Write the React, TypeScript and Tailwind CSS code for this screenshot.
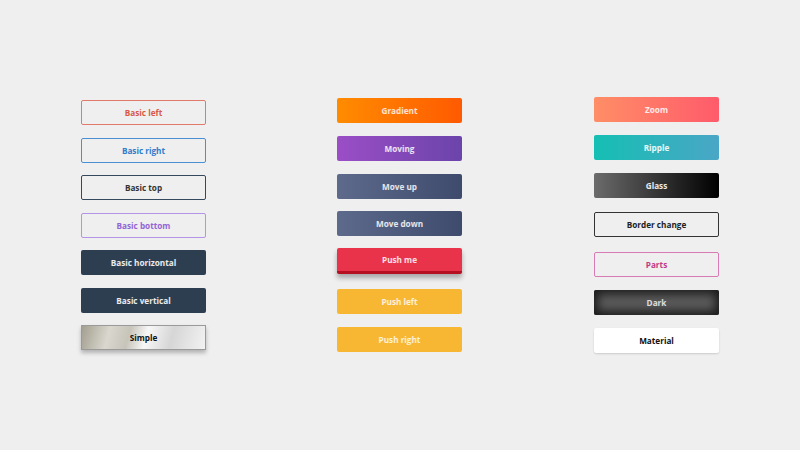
import React from 'react'

const base =
  "flex h-[25px] w-[125px] items-center justify-center rounded-[2px] pt-[2px] text-[8.2px] font-bold leading-none [font-family:'Open_Sans',sans-serif]"

export default function App() {
  return (
    <div className="flex h-[450px] w-full gap-[131px] bg-[#efefef] pl-[81px]">
      {/* Outline and flat buttons */}
      <div className="flex flex-col gap-[12.5px] pt-[100px]">
        <button className={`${base} border border-[#e07a6a] text-[#d95a45]`}>Basic left</button>
        <button className={`${base} border border-[#4a8fd0] text-[#2f7ccb]`}>Basic right</button>
        <button className={`${base} border border-[#34495e] text-[#333]`}>Basic top</button>
        <button className={`${base} border border-[#b394e6] text-[#9264d6]`}>Basic bottom</button>
        <button className={`${base} bg-[#2c3e50] text-white/90`}>Basic horizontal</button>
        <button className={`${base} bg-[#2c3e50] text-white/90`}>Basic vertical</button>
        <button
          className={`${base} rounded-none border border-[#9a9a9a] bg-[linear-gradient(105deg,#a39f90_0%,#d9d7ce_22%,#c7c4ba_38%,#f7f7f7_52%,#d6d6d6_72%,#f2f2f2_100%)] text-[#111] shadow-[0_3px_4px_rgba(0,0,0,0.25)]`}
        >
          Simple
        </button>
      </div>

      {/* Solid and gradient buttons */}
      <div className="flex flex-col pt-[98px]">
        <button className={`${base} bg-[linear-gradient(90deg,#ff8c00,#ff5a00)] text-white/80`}>Gradient</button>
        <button className={`${base} mt-[13px] bg-[linear-gradient(90deg,#9b4ec6,#6b44aa)] text-white/85`}>Moving</button>
        <button className={`${base} mt-[13px] bg-[linear-gradient(90deg,#5e6a8c,#3f4b6c)] text-white/85`}>Move up</button>
        <button className={`${base} mt-[12px] bg-[linear-gradient(90deg,#5e6a8c,#3f4b6c)] text-white/85`}>Move down</button>
        <button
          className={`${base} mt-[12px] h-[26px] border-b-[3px] border-[#b5101f] bg-[#e9334a] text-white/85 shadow-[0_4px_5px_rgba(0,0,0,0.3)]`}
        >
          Push me
        </button>
        <button className={`${base} mt-[15px] bg-[#f7b733] text-white/80`}>Push left</button>
        <button className={`${base} mt-[13px] bg-[#f7b733] text-white/80`}>Push right</button>
      </div>

      {/* Effect buttons */}
      <div className="ml-px flex w-[124px] flex-col pt-[97px]">
        <button className={`${base} w-[124px] bg-[linear-gradient(90deg,#ff8e66,#ff5b6b)] text-white/85`}>Zoom</button>
        <button className={`${base} mt-[13px] w-[124px] bg-[linear-gradient(90deg,#15bfb3,#4aa6c6)] text-white/90`}>Ripple</button>
        <button className={`${base} mt-[13px] w-[124px] bg-[linear-gradient(90deg,#6b6b6b,#000)] text-white/90`}>Glass</button>
        <button className={`${base} mt-[14px] w-[124px] border-[1.5px] border-[#333] text-[#222]`}>Border change</button>
        <button className={`${base} mt-[15px] w-[124px] border border-[#d77bb4] text-[#c23a86]`}>Parts</button>
        <button className={`${base} mt-[13px] w-[124px] bg-[#5a5a5a] text-white/80 shadow-[inset_0_0_10px_4px_#1c1c1c]`}>Dark</button>
        <button className={`${base} mt-[13px] w-[124px] bg-white text-[#111] shadow-[0_1px_2px_rgba(0,0,0,0.15)]`}>Material</button>
      </div>
    </div>
  )
}
